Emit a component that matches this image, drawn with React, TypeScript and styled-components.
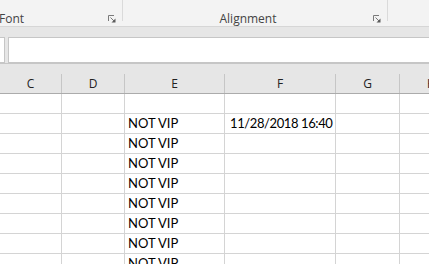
import * as React from "react";
import styled, { createGlobalStyle } from "styled-components";

const GlobalStyle = createGlobalStyle`
  html, body {
    margin: 0;
    padding: 0;
    width: 429px;
    height: 264px;
    overflow: hidden;
    background: #ffffff;
  }
`;

const COLUMNS = [
  { id: "C", width: 62 },
  { id: "D", width: 63 },
  { id: "E", width: 100 },
  { id: "F", width: 111 },
  { id: "G", width: 64 },
  { id: "H", width: 64 },
];

const ROWS: Record<string, string>[] = [
  {},
  { E: "NOT VIP", F: "11/28/2018 16:40" },
  { E: "NOT VIP" },
  { E: "NOT VIP" },
  { E: "NOT VIP" },
  { E: "NOT VIP" },
  { E: "NOT VIP" },
  { E: "NOT VIP" },
  { E: "NOT VIP" },
  { E: "NOT VIP" },
];

const App: React.FC = () => {
  return (
    <Sheet>
      <GlobalStyle />

      <Ribbon>
        <RibbonGroup width={207}>
          <GroupLabel>Font</GroupLabel>
          <Launcher />
        </RibbonGroup>
        <RibbonGroup width={264}>
          <GroupLabel>Alignment</GroupLabel>
          <Launcher />
        </RibbonGroup>
        <RibbonGroup width={60} />
      </Ribbon>

      <FormulaBand>
        <NameBox />
        <FormulaInput />
      </FormulaBand>

      <HeaderBand>
        {COLUMNS.map(col => (
          <ColHeader key={col.id} width={col.width}>{col.id}</ColHeader>
        ))}
      </HeaderBand>

      <Grid>
        {ROWS.map((row, i) => (
          <Row key={i}>
            {COLUMNS.map(col => (
              <Cell key={col.id} width={col.width} date={col.id === "F"}>
                {row[col.id] || ""}
              </Cell>
            ))}
          </Row>
        ))}
      </Grid>
    </Sheet>
  );
};

export default App;

const Launcher: React.FC = () => (
  <LauncherWrap>
    <svg width="8" height="8" viewBox="0 0 8 8">
      <path d="M0.5 6V0.5H6" fill="none" stroke="#7a7a7a" strokeWidth="1" />
      <path d="M2.5 2.5L6 6" stroke="#7a7a7a" strokeWidth="1" />
      <path d="M3.5 7.5H7.5V3.5Z" fill="#5c5c5c" />
    </svg>
  </LauncherWrap>
);

interface WidthProps {
  width: number;
}

interface CellProps extends WidthProps {
  date?: boolean;
}

const Sheet = styled.div`
  display: flex;
  flex-direction: column;
  width: 429px;
  height: 264px;
  overflow: hidden;
  font-family: "Open Sans", "Noto Sans", sans-serif;
`;

const Ribbon = styled.div`
  display: flex;
  flex-shrink: 0;
  height: 26px;
  margin-left: -85px;
  background: #f3f3f3;
  border-bottom: 1px solid #d6d6d6;
`;

const RibbonGroup = styled.div<WidthProps>`
  display: flex;
  align-items: flex-end;
  flex-shrink: 0;
  width: ${props => props.width}px;
  height: 21px;
  border-right: 1px solid #dadada;
`;

const GroupLabel = styled.div`
  flex: 1;
  text-align: center;
  font-size: 12px;
  line-height: 16px;
  margin-bottom: -6px;
  color: #444444;
`;

const LauncherWrap = styled.div`
  display: flex;
  width: 11px;
  height: 8px;
  margin: 0 3px -2px 0;
`;

const FormulaBand = styled.div`
  display: flex;
  flex-shrink: 0;
  gap: 3px;
  height: 26px;
  padding-top: 10px;
  background: #e6e6e6;
`;

const NameBox = styled.div`
  width: 4px;
  height: 24px;
  background: #ffffff;
  border: 1px solid #c6c6c6;
  border-left: none;
`;

const FormulaInput = styled.div`
  flex: 1;
  height: 24px;
  background: #ffffff;
  border: 1px solid #c6c6c6;
  border-right: none;
`;

const HeaderBand = styled.div`
  display: flex;
  flex-shrink: 0;
  height: 19px;
  padding-top: 10px;
  background: #e6e6e6;
  border-top: 1px solid #c6c6c6;
  border-bottom: 1px solid #ababab;
`;

const ColHeader = styled.div<WidthProps>`
  flex-shrink: 0;
  box-sizing: border-box;
  width: ${props => props.width}px;
  height: 19px;
  border-right: 1px solid #c6c6c6;
  text-align: center;
  font-size: 12px;
  line-height: 20px;
  color: #222222;
`;

const Grid = styled.div`
  display: flex;
  flex-direction: column;
`;

const Row = styled.div`
  display: flex;
  flex-shrink: 0;
  height: 20px;
`;

const Cell = styled.div<CellProps>`
  flex-shrink: 0;
  box-sizing: border-box;
  width: ${props => props.width}px;
  height: 20px;
  padding: 0 3px;
  border-right: 1px solid #d4d4d4;
  border-bottom: 1px solid #d4d4d4;
  font-family: Lato, "Liberation Sans", sans-serif;
  font-size: 13px;
  line-height: 19px;
  color: #000000;
  white-space: nowrap;
  ${props => props.date && `
    padding-left: 5px;
    letter-spacing: -0.4px;
  `}
`;
